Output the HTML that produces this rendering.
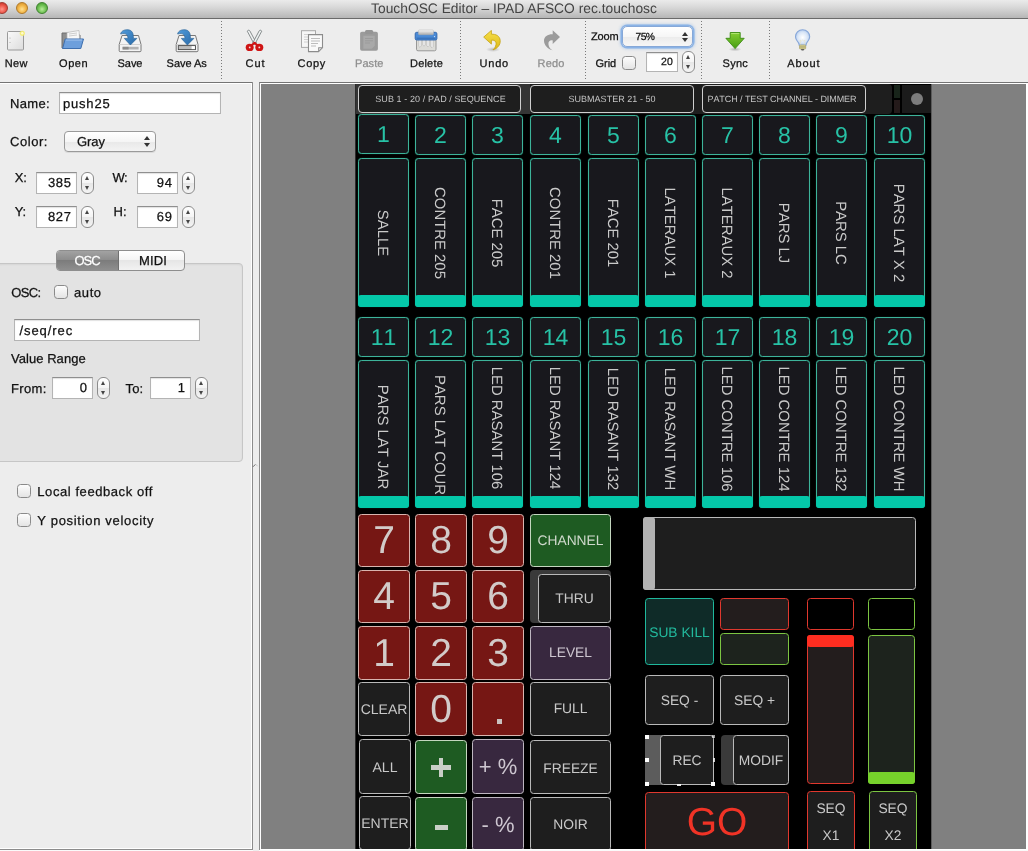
<!DOCTYPE html>
<html><head><meta charset="utf-8"><title>TouchOSC Editor</title>
<style>
*{box-sizing:border-box;margin:0;padding:0}
html,body{width:1028px;height:851px;overflow:hidden;background:#ededed;font-family:"Liberation Sans",sans-serif;}
body{position:relative;-webkit-font-smoothing:antialiased;text-rendering:geometricPrecision}
#root{position:absolute;left:0;top:0;width:1028px;height:851px;will-change:transform}
.a{position:absolute}
.t{position:absolute;white-space:nowrap;line-height:1;-webkit-text-stroke:.25px currentColor}
/* title bar */
#title{left:0;top:0;width:1028px;height:19px;background:linear-gradient(#ebebeb,#d6d6d6 45%,#b6b6b6);border-bottom:1px solid #6a6a6a}
#title .tt{left:0;width:1028px;top:2px;text-align:center;font-size:13.8px;color:#444;-webkit-text-stroke:0}
.tl{position:absolute;top:2px;width:12px;height:12px;border-radius:50%}
/* toolbar */
.lbl{font-size:11.5px;color:#111;text-align:center;letter-spacing:.3px}
.lbl.dis{color:#8e8e8e}
.sep{position:absolute;top:21px;width:1px;height:58px;background:repeating-linear-gradient(to bottom,#7a7a7a 0,#7a7a7a 1px,transparent 1px,transparent 3px)}
/* inputs */
.tf{position:absolute;background:#fff;border:1px solid #b4b4b4;border-top-color:#8f8f8f;box-shadow:inset 0 1px 1px rgba(0,0,0,.12)}
.tf span{position:absolute;font-size:13px;color:#111;line-height:1;letter-spacing:.4px;-webkit-text-stroke:.25px currentColor}
.st{position:absolute;width:13px;height:22px;border:1px solid #8c8c8c;border-radius:6px;background:linear-gradient(#fff,#f4f4f4 50%,#e6e6e6 50%,#f4f4f4)}
.st:before{content:"";position:absolute;left:3px;top:3px;border:2.5px solid transparent;border-bottom:4px solid #444;border-top:0}
.st:after{content:"";position:absolute;left:3px;bottom:3px;border:2.5px solid transparent;border-top:4px solid #444;border-bottom:0}
.cb{position:absolute;width:14px;height:14px;border:1px solid #8a8a8a;border-radius:3.5px;background:linear-gradient(#fdfdfd,#e4e4e4)}
.pl{font-size:13px;color:#111;letter-spacing:.35px}
/* canvas */
#cv{left:261px;top:84px;width:765px;height:765px;background:#808080;overflow:hidden}
#ly{left:95px;top:0;width:576px;height:768px;background:#000;font-kerning:none}
.b{position:absolute;border:1px solid;border-radius:3.5px}
.c{position:absolute;left:0;top:0;width:100%;height:100%;display:flex;align-items:center;justify-content:center;white-space:nowrap;line-height:1}
.teal{border-color:#3db39a;background:#18181d;box-shadow:0 0 1px rgba(40,180,150,.55),inset 0 0 1px rgba(40,180,150,.35)}
.num{color:#27c2a6;font-size:23px}
.fl{position:absolute;left:calc(50% - 1.1px);color:#c9c9c9;font-size:14.9px;line-height:1;white-space:nowrap;transform:translate(-50%,-50%) rotate(90deg)}
.h{position:absolute;left:-1px;right:-1px;bottom:-1px;height:12px;background:#04c8a9;border-radius:3px}
.red{background:#761714;border-color:#d9b4ae;color:#d2cbc9}
.gry{background:#1e1e1e;border-color:#b9b9b9;color:#c8c8c8}
.grn{background:#1e5b22;border-color:#c4d6bf;color:#cfd9cc}
.pur{background:#38283f;border-color:#bdb6c0;color:#cdc6d0}
</style></head>
<body><div id="root">
<div id="title" class="a"><div class="tl" style="left:-4px;background:radial-gradient(circle at 50% 62%,#ff978c,#ee5a4e 45%,#c7342a 85%,#b02a22);border:1px solid #9f3a32"></div><div class="tl" style="left:16px;background:radial-gradient(circle at 50% 62%,#ffe193,#f3b84a 45%,#d9942e 85%,#c5842a);border:1px solid #b07a2a"></div><div class="tl" style="left:36px;background:radial-gradient(circle at 50% 62%,#b9ec9c,#74c458 45%,#47a032 85%,#3c8c2a);border:1px solid #3f8230"></div><div class="t tt">TouchOSC Editor – IPAD AFSCO rec.touchosc</div></div>
<div class="a" style="left:0;top:19px;width:1028px;height:63px;background:#ededed"></div><div class="a" style="left:0;top:82px;width:1028px;height:1px;background:#747474"></div><div class="a" style="left:0;top:83px;width:1028px;height:1px;background:#fff"></div><svg class="a" style="left:6.0px;top:30px" width="20" height="22" viewBox="0 0 20 22"><defs><linearGradient id="gn" x1="0" y1="0" x2="1" y2="1"><stop offset="0" stop-color="#fafafa"/><stop offset="1" stop-color="#dcdcdc"/></linearGradient></defs><rect x="1.5" y="1.5" width="16" height="18.5" rx="1" fill="url(#gn)" stroke="#9a9a9a"/><circle cx="4" cy="8" r=".6" fill="#aaa"/><circle cx="4" cy="12.5" r=".6" fill="#aaa"/><circle cx="16.3" cy="3.3" r="2.6" fill="#f6ee70" opacity=".9"/><circle cx="16.3" cy="3.3" r="1.2" fill="#fffbd0"/></svg><div class="t" style="left:4.7px;top:59px;font-size:11px;color:#111;letter-spacing:0.40px">New</div>
<svg class="a" style="left:60.0px;top:29px" width="26" height="22" viewBox="0 0 26 22"><path d="M2 4h7l2 2h9v13H2z" fill="#8f8f8f" stroke="#6e6e6e"/><path d="M7 3.5l12-2 .8 12H7z" fill="#f8f8f8" stroke="#b5b5b5" stroke-width=".7"/><path d="M9 5l8-1M9 7l8-1" stroke="#c2c2c2" stroke-width=".8"/><path d="M5.2 10h18.3l-2.7 9.5H2.6z" fill="#6d9fdc" stroke="#3f6fae"/><path d="M5.8 11h16.4" stroke="#a6c6ee" stroke-width="1"/></svg><div class="t" style="left:59.1px;top:59px;font-size:11px;color:#111;letter-spacing:0.50px">Open</div>
<svg class="a" style="left:118.0px;top:28px" width="24" height="25" viewBox="0 0 24 25"><defs><linearGradient id="gb1" x1="0" y1="0" x2="1" y2="1"><stop offset="0" stop-color="#4f9bdb"/><stop offset="1" stop-color="#2a6aa8"/></linearGradient></defs><path d="M4 7.500H20.500L23 16.500V22.700a1 1 0 0 1-1 1H2.200a1 1 0 0 1-1-1V16.500z" fill="#f3f3f3" stroke="#787878" stroke-width="1"/><path d="M1.500 16.500H22.700" stroke="#c9c9c9" stroke-width=".8"/><rect x="4.600" y="18.800" width="16" height="2.700" fill="#b3b3b3"/><rect x="4.600" y="18.800" width="6" height="2.700" fill="#8b8b8b"/><path d="M2.600 6C3.400 2.600 6.800 1.500 10 1.800c4 .3 5.600 3.200 5.400 8.600h3.500L12.400 17 6.300 10.400h3.600C10 7 8 4.600 2.600 6z" fill="url(#gb1)" stroke="#2d6699" stroke-width=".7" stroke-linejoin="round"/></svg><div class="t" style="left:117.6px;top:59px;font-size:11px;color:#111;letter-spacing:-0.07px">Save</div>
<svg class="a" style="left:175.0px;top:28px" width="24" height="25" viewBox="0 0 24 25"><defs><linearGradient id="gb2" x1="0" y1="0" x2="1" y2="1"><stop offset="0" stop-color="#4f9bdb"/><stop offset="1" stop-color="#2a6aa8"/></linearGradient></defs><path d="M4 7.500H20.500L23 16.500V22.700a1 1 0 0 1-1 1H2.200a1 1 0 0 1-1-1V16.500z" fill="#f3f3f3" stroke="#787878" stroke-width="1"/><path d="M1.500 16.500H22.700" stroke="#c9c9c9" stroke-width=".8"/><rect x="3.300" y="17.600" width="17.200" height="4" fill="#bdbdbd" stroke="#4a4a4a" stroke-width=".9"/><rect x="16.600" y="18.100" width="3.300" height="3" fill="#fff"/><path d="M2.600 6C3.400 2.600 6.800 1.500 10 1.800c4 .3 5.600 3.200 5.400 8.600h3.500L12.400 17 6.300 10.400h3.600C10 7 8 4.600 2.600 6z" fill="url(#gb2)" stroke="#2d6699" stroke-width=".7" stroke-linejoin="round"/></svg><div class="t" style="left:166.6px;top:59px;font-size:11px;color:#111;letter-spacing:-0.02px">Save As</div>
<svg class="a" style="left:245.0px;top:29px" width="20" height="24" viewBox="0 0 20 24"><path d="M2.300 2.200c.5-1.300 2.100-1.300 2.600-.2L11.300 14l-1.900 1.600z" fill="#f2f5f5" stroke="#7c8182" stroke-width=".9"/><path d="M16.700 2.200c-.5-1.300-2.100-1.300-2.600-.2L7.700 14l1.900 1.600z" fill="#eef2f2" stroke="#7c8182" stroke-width=".9"/><ellipse cx="4.700" cy="18.400" rx="4" ry="3.700" fill="#cf1414"/><ellipse cx="14.300" cy="18.400" rx="4" ry="3.700" fill="#cf1414"/><path d="M6.500 16.500l3-2.700 3 2.700" fill="none" stroke="#cf1414" stroke-width="2.200" stroke-linejoin="round"/><circle cx="4.700" cy="18.400" r=".9" fill="#f3dede"/><circle cx="14.300" cy="18.400" r=".9" fill="#f3dede"/></svg><div class="t" style="left:245.6px;top:59px;font-size:11px;color:#111;letter-spacing:0.89px">Cut</div>
<svg class="a" style="left:300.0px;top:29px" width="24" height="24" viewBox="0 0 24 24"><rect x="1.500" y="1.700" width="14" height="16.700" fill="#f6f6f6" stroke="#a9a9a9"/><path d="M4 5.500h6M4 8h4M4 10.500h4M4 13h4" stroke="#cdcdcd" stroke-width=".9"/><path d="M8.500 5.600h14v13l-4 4h-10z" fill="#fafafa" stroke="#8c8c8c" stroke-width="1.100"/><path d="M22.500 18.600h-4v4z" fill="#d2d2d2" stroke="#8c8c8c" stroke-width=".8" stroke-linejoin="round"/><path d="M11 9.500h9M11 12h9M11 14.500h7M11 17h5" stroke="#b5b5b5" stroke-width=".9"/></svg><div class="t" style="left:297.6px;top:59px;font-size:11px;color:#111;letter-spacing:0.68px">Copy</div>
<svg class="a" style="left:359.0px;top:29px" width="20" height="24" viewBox="0 0 20 24"><rect x="1.100" y="2.800" width="17.800" height="19" rx="1.800" fill="#9b9b9b"/><rect x="6" y=".9" width="8.200" height="4" rx="1.500" fill="#959595"/><path d="M4.300 6.800h11.400v10l-3 3H4.300z" fill="#a9a9a9"/><path d="M6 9.500h8M6 11.800h8M6 14h5" stroke="#9a9a9a" stroke-width=".9"/></svg><div class="t" style="left:355.1px;top:59px;font-size:11px;color:#8e8e8e;letter-spacing:0.03px">Paste</div>
<svg class="a" style="left:414.0px;top:29px" width="24" height="24" viewBox="0 0 24 24"><defs><linearGradient id="gd" x1="0" y1="0" x2="0" y2="1"><stop offset="0" stop-color="#fafafa"/><stop offset="1" stop-color="#a9a9a9"/></linearGradient></defs><rect x="2.500" y="10" width="19.500" height="11.800" rx="1.500" fill="#dcdcd8" stroke="#8f8f8f" stroke-width=".9"/><path d="M5 11v6.500q1 2 2-.5V11M9 11v5q1 2.500 2 0V11M13 11v6q1 2 2-.5V11M17 11v7q1 1.500 2-.5V11" fill="#fbfbfb" stroke="#a2a2a2" stroke-width=".5"/><rect x="1.200" y="3.300" width="21.700" height="7.700" rx="1.500" fill="#4a8ad6" stroke="#2c62a8" stroke-width=".9"/><path d="M2.500 9.200h19" stroke="#2c62a8" stroke-width=".8"/><rect x="4.400" y="1" width="15.100" height="4.700" rx="1" fill="url(#gd)" stroke="#b4b4b4" stroke-width=".5"/><circle cx="20.500" cy="7.600" r=".6" fill="#d8e6f8"/></svg><div class="t" style="left:410.0px;top:59px;font-size:11px;color:#111;letter-spacing:0.20px">Delete</div>
<svg class="a" style="left:483.0px;top:30px" width="20" height="24" viewBox="0 0 20 24"><defs><radialGradient id="gsh"><stop offset="0" stop-color="#000" stop-opacity=".22"/><stop offset="1" stop-color="#000" stop-opacity="0"/></radialGradient><linearGradient id="gu" x1="0" y1="0" x2="0" y2="1"><stop offset="0" stop-color="#f7e04a"/><stop offset="1" stop-color="#dcb818"/></linearGradient></defs><ellipse cx="10" cy="19.500" rx="7" ry="2.500" fill="url(#gsh)"/><path d="M8.400.4L.7 7.100l7.700 7V10.200c3.100-.4 5.100 1.300 4.600 4.300-.4 2.300-1.500 4-3 5.300 4.500-1.300 7.500-4.800 7.200-9.300C16.800 6 13 4 8.400 4.200z" fill="url(#gu)" stroke="#c4a212" stroke-width=".8" stroke-linejoin="round"/></svg><div class="t" style="left:479.6px;top:59px;font-size:11px;color:#111;letter-spacing:0.75px">Undo</div>
<svg class="a" style="left:542.0px;top:30px" width="20" height="24" viewBox="0 0 20 24"><path d="M10.700.2L18 7.100l-7.300 7V10.400c-3.100-.4-4.700 1.300-4.200 4.300.4 2.300 1.700 4.300 4 5.600C6 19 2.100 15.500 2 10.700 2 6.200 6.100 4 10.700 4.200z" fill="#9b9b9b"/></svg><div class="t" style="left:537.6px;top:59px;font-size:11px;color:#8e8e8e;letter-spacing:0.13px">Redo</div>
<svg class="a" style="left:725.0px;top:31px" width="20" height="21" viewBox="0 0 20 21"><defs><linearGradient id="gs" x1="0" y1="0" x2="0" y2="1"><stop offset="0" stop-color="#86cf34"/><stop offset="1" stop-color="#459c12"/></linearGradient><radialGradient id="gsh2"><stop offset="0" stop-color="#000" stop-opacity=".25"/><stop offset="1" stop-color="#000" stop-opacity="0"/></radialGradient></defs><ellipse cx="10" cy="18.300" rx="6.500" ry="2" fill="url(#gsh2)"/><path d="M5.200 1.500h10v5.800h4L10.100 17.600.9 7.300h4.300z" fill="url(#gs)" stroke="#3b8a12" stroke-width=".9" stroke-linejoin="round"/><path d="M6.200 2.500h8" stroke="#b4e678" stroke-width=".9"/></svg><div class="t" style="left:722.6px;top:59px;font-size:11px;color:#111;letter-spacing:0.24px">Sync</div>
<svg class="a" style="left:794.0px;top:27.500px" width="18" height="26" viewBox="0 0 18 26"><defs><radialGradient id="ga" cx=".5" cy=".5" r=".6"><stop offset="0" stop-color="#ffffff"/><stop offset=".55" stop-color="#dbe7f7"/><stop offset="1" stop-color="#a3c0ea"/></radialGradient></defs><path d="M8.600 1.800c-4.200 0-7.100 3.100-7.100 6.900 0 2.600 1.500 4 2.600 5.500.7 1 1.100 2 1.100 3h6.800c0-1 .4-2 1.100-3 1.100-1.500 2.600-2.900 2.600-5.500 0-3.800-2.900-6.900-7.100-6.900z" fill="url(#ga)" stroke="#86a6d8" stroke-width="1.100"/><path d="M6.600 16.500l-.4-4.500 1.200 1 1.200-1 1.200 1 1.200-1-.4 4.500" fill="none" stroke="#e6e2c8" stroke-width=".7"/><rect x="5.500" y="17" width="6.200" height="4" rx=".8" fill="#ddd69a" stroke="#a39c62" stroke-width=".6"/><path d="M5.700 18.400h5.800M5.700 19.700h5.800" stroke="#a39c62" stroke-width=".6"/><path d="M6.800 21h3.600l-.9 1.600H7.700z" fill="#5e5e5e"/></svg><div class="t" style="left:787.2px;top:59px;font-size:11px;color:#111;letter-spacing:0.89px">About</div>
<div class="sep" style="left:221px"></div><div class="sep" style="left:460px"></div><div class="sep" style="left:585px"></div><div class="sep" style="left:701px"></div><div class="sep" style="left:769px"></div><div class="t" style="left:591.0px;top:32px;font-size:11px;color:#111;letter-spacing:-0.18px">Zoom</div><div class="a" style="left:622px;top:26px;width:71px;height:21px;border:1px solid #86a8d8;border-radius:5px;background:linear-gradient(#fff,#f6f6f6 50%,#ebebeb 50%,#f6f6f6);box-shadow:0 0 0 1.5px rgba(120,168,228,.75),0 0 3px 1.5px rgba(120,168,228,.45)"></div><div class="t" style="left:635.6px;top:33px;font-size:10.3px;color:#111;letter-spacing:-0.61px">75%</div><div class="a" style="left:681.700px;top:31.500px;border:3px solid transparent;border-bottom:4.500px solid #333;border-top:0"></div><div class="a" style="left:681.700px;top:38px;border:3px solid transparent;border-top:4.500px solid #333;border-bottom:0"></div><div class="t" style="left:595.6px;top:59px;font-size:11px;color:#111;letter-spacing:-0.07px">Grid</div><div class="cb" style="left:622px;top:56px"></div><div class="tf" style="left:646px;top:52px;width:32px;height:20px"><span style="right:4px;top:4px;font-size:10.5px;letter-spacing:.2px">20</span></div><div class="st" style="left:682px;top:51px"></div>
<div class="a" style="left:0;top:84px;width:251px;height:765px;background:#ededed"></div><div class="a" style="left:251px;top:83px;width:1px;height:766px;background:#fff"></div><div class="a" style="left:252px;top:82px;width:1px;height:768px;background:#8c8c8c"></div><div class="a" style="left:0;top:848px;width:252px;height:1px;background:#fff"></div><div class="a" style="left:0;top:849px;width:253px;height:1px;background:#8c8c8c"></div><div class="a" style="left:0;top:850px;width:1028px;height:1px;background:#fafafa"></div><div class="a" style="left:253px;top:82px;width:6px;height:769px;background:#ededed"></div><svg class="a" style="left:252px;top:462px" width="8" height="7" viewBox="0 0 8 7"><path d="M1 4.800L3.600 2.200" stroke="#6a6a6a" stroke-width="1" fill="none"/><path d="M3.600 2.200L5.600 4.200" stroke="#c4c4c4" stroke-width="1" fill="none"/></svg><div class="a" style="left:259px;top:82px;width:769px;height:768px;background:#fff;border-left:1px solid #8c8c8c;border-top:1px solid #747474"></div><div class="t" style="left:10.0px;top:97px;font-size:13px;color:#111;letter-spacing:0.32px">Name:</div><div class="tf" style="left:59px;top:92px;width:162px;height:22px"><span style="left:3px;top:4px;letter-spacing:.8px">push25</span></div><div class="t" style="left:10.0px;top:134.5px;font-size:13px;color:#111;letter-spacing:0.55px">Color:</div><div class="a" style="left:64px;top:131px;width:92px;height:21px;border:1px solid #9a9a9a;border-radius:4px;background:linear-gradient(#fff,#f5f5f5 50%,#e8e8e8 50%,#f3f3f3);box-shadow:0 1px 0 rgba(0,0,0,.08)"></div><div class="t" style="left:77.0px;top:134.5px;font-size:13px;color:#111;letter-spacing:-0.09px">Gray</div><div class="a" style="left:143.500px;top:135.500px;border:3px solid transparent;border-bottom:4.500px solid #333;border-top:0"></div><div class="a" style="left:143.500px;top:142.500px;border:3px solid transparent;border-top:4.500px solid #333;border-bottom:0"></div><div class="t" style="left:14.8px;top:171px;font-size:13px;color:#111;letter-spacing:-0.34px">X:</div><div class="tf" style="left:36px;top:172px;width:41px;height:22px"><span style="right:4.500px;top:3px;font-size:13px;letter-spacing:.6px">385</span></div><div class="st" style="left:81px;top:172px"></div><div class="t" style="left:112.6px;top:171px;font-size:13px;color:#111;letter-spacing:-0.54px">W:</div><div class="tf" style="left:137px;top:172px;width:41px;height:22px"><span style="right:4.500px;top:3px;font-size:13px;letter-spacing:.6px">94</span></div><div class="st" style="left:182px;top:172px"></div><div class="t" style="left:14.8px;top:205px;font-size:13px;color:#111;letter-spacing:-0.34px">Y:</div><div class="tf" style="left:36px;top:206px;width:41px;height:22px"><span style="right:4.500px;top:3px;font-size:13px;letter-spacing:.6px">827</span></div><div class="st" style="left:81px;top:206px"></div><div class="t" style="left:113.6px;top:205px;font-size:13px;color:#111;letter-spacing:-0.10px">H:</div><div class="tf" style="left:137px;top:206px;width:41px;height:22px"><span style="right:4.500px;top:3px;font-size:13px;letter-spacing:.6px">69</span></div><div class="st" style="left:182px;top:206px"></div>
<div class="a" style="left:-4px;top:263px;width:247px;height:199px;background:#e3e3e3;border:1px solid #c6c6c6;border-radius:4px;box-shadow:inset 0 1px 2px rgba(0,0,0,.06)"></div><div class="a" style="left:56px;top:250px;width:129px;height:21px;border:1px solid #8e8e8e;border-radius:4px;background:linear-gradient(#fff,#f4f4f4 50%,#e6e6e6 50%,#f2f2f2);overflow:hidden"><div class="a" style="left:0;top:0;width:62px;height:19px;background:linear-gradient(#a2a2a2,#8b8b8b 50%,#7c7c7c 50%,#8e8e8e);border-right:1px solid #707070"></div></div><div class="t" style="left:74.6px;top:254px;font-size:13px;color:#fff;letter-spacing:-1.12px">OSC</div><div class="t" style="left:139.1px;top:254px;font-size:13px;color:#111;letter-spacing:0.14px">MIDI</div><div class="t" style="left:11.2px;top:285.5px;font-size:13px;color:#111;letter-spacing:-0.65px">OSC:</div><div class="cb" style="left:54px;top:285px"></div><div class="t" style="left:74.0px;top:285.5px;font-size:13px;color:#111;letter-spacing:0.60px">auto</div><div class="tf" style="left:14px;top:319px;width:186px;height:22px"><span style="left:4.500px;top:4px;letter-spacing:.92px">/seq/rec</span></div><div class="t" style="left:10.9px;top:352px;font-size:13px;color:#111;letter-spacing:0.06px">Value Range</div><div class="t" style="left:10.9px;top:382px;font-size:13px;color:#111;letter-spacing:0.41px">From:</div><div class="tf" style="left:52px;top:377px;width:41px;height:22px"><span style="right:4.500px;top:3px;font-size:13px;letter-spacing:.6px">0</span></div><div class="st" style="left:97px;top:377px"></div><div class="t" style="left:125.4px;top:382px;font-size:13px;color:#111;letter-spacing:0.24px">To:</div><div class="tf" style="left:150px;top:377px;width:41px;height:22px"><span style="right:4.500px;top:3px;font-size:13px;letter-spacing:.6px">1</span></div><div class="st" style="left:195px;top:377px"></div><div class="cb" style="left:17px;top:484px"></div><div class="t" style="left:37.3px;top:485px;font-size:13px;color:#111;letter-spacing:0.57px">Local feedback off</div><div class="cb" style="left:17px;top:513px"></div><div class="t" style="left:37.3px;top:514px;font-size:13px;color:#111;letter-spacing:0.69px">Y position velocity</div><div id="cv" class="a"><div id="ly" class="a">
<div class="a" style="left:0;top:0;width:536px;height:30px;background:#1e1e1e;border-radius:0 4px 4px 0"></div><div class="a" style="left:0;top:0;width:174px;height:30px;background:#353535"></div><div class="b " style="left:2px;top:1px;width:163px;height:28px;background:#1e1e1e;border-color:#cfcfcf;border-radius:4px"><div class="c" style="font-size:9px;color:#c4c4c4;letter-spacing:0.09px;left:1px">SUB 1 - 20 / PAD / SEQUENCE</div></div><div class="b " style="left:174px;top:1px;width:164px;height:28px;background:#1e1e1e;border-color:#cfcfcf;border-radius:4px"><div class="c" style="font-size:9px;color:#c4c4c4;letter-spacing:0.04px;left:0px">SUBMASTER 21 - 50</div></div><div class="b " style="left:346px;top:1px;width:164px;height:28px;background:#1e1e1e;border-color:#cfcfcf;border-radius:4px"><div class="c" style="font-size:9px;color:#c4c4c4;letter-spacing:-0.07px;left:-2px">PATCH / TEST CHANNEL - DIMMER</div></div><div class="a" style="left:538px;top:1px;width:6px;height:13px;background:#18241a"></div><div class="a" style="left:538px;top:16px;width:6px;height:13px;background:#241a1a"></div><div class="a" style="left:546px;top:1px;width:30px;height:28px;background:#1b1b1b"></div><div class="a" style="left:555px;top:9px;width:12px;height:12px;border-radius:50%;background:#7d7d7d"></div>
<div class="b teal" style="left:2px;top:30px;width:51px;height:40px;"><div class="c num">1</div></div><div class="b teal" style="left:2px;top:74px;width:51px;height:149px;"><span class="fl" style="top:74px">SALLE</span><div class="h"></div></div><div class="b teal" style="left:59px;top:31px;width:51px;height:40px;"><div class="c num">2</div></div><div class="b teal" style="left:59px;top:74px;width:51px;height:149px;"><span class="fl" style="top:74px">CONTRE 205</span><div class="h"></div></div><div class="b teal" style="left:116px;top:31px;width:51px;height:40px;"><div class="c num">3</div></div><div class="b teal" style="left:116px;top:74px;width:51px;height:149px;"><span class="fl" style="top:74px">FACE 205</span><div class="h"></div></div><div class="b teal" style="left:174px;top:31px;width:51px;height:40px;"><div class="c num">4</div></div><div class="b teal" style="left:174px;top:74px;width:51px;height:149px;"><span class="fl" style="top:74px">CONTRE 201</span><div class="h"></div></div><div class="b teal" style="left:232px;top:31px;width:51px;height:40px;"><div class="c num">5</div></div><div class="b teal" style="left:232px;top:74px;width:51px;height:149px;"><span class="fl" style="top:74px">FACE 201</span><div class="h"></div></div><div class="b teal" style="left:289px;top:31px;width:51px;height:40px;"><div class="c num">6</div></div><div class="b teal" style="left:289px;top:74px;width:51px;height:149px;"><span class="fl" style="top:74px">LATERAUX 1</span><div class="h"></div></div><div class="b teal" style="left:346px;top:31px;width:51px;height:40px;"><div class="c num">7</div></div><div class="b teal" style="left:346px;top:74px;width:51px;height:149px;"><span class="fl" style="top:74px">LATERAUX 2</span><div class="h"></div></div><div class="b teal" style="left:403px;top:31px;width:51px;height:40px;"><div class="c num">8</div></div><div class="b teal" style="left:403px;top:74px;width:51px;height:149px;"><span class="fl" style="top:74px">PARS LJ</span><div class="h"></div></div><div class="b teal" style="left:460px;top:31px;width:51px;height:40px;"><div class="c num">9</div></div><div class="b teal" style="left:460px;top:74px;width:51px;height:149px;"><span class="fl" style="top:74px">PARS LC</span><div class="h"></div></div><div class="b teal" style="left:518px;top:31px;width:51px;height:40px;"><div class="c num">10</div></div><div class="b teal" style="left:518px;top:74px;width:51px;height:149px;"><span class="fl" style="top:74px">PARS LAT X 2</span><div class="h"></div></div><div class="b teal" style="left:2px;top:233px;width:51px;height:40px;"><div class="c num">11</div></div><div class="b teal" style="left:2px;top:276px;width:51px;height:148px;"><span class="fl" style="top:75.6px">PARS LAT JAR</span><div class="h"></div></div><div class="b teal" style="left:59px;top:233px;width:51px;height:40px;"><div class="c num">12</div></div><div class="b teal" style="left:59px;top:276px;width:51px;height:148px;"><span class="fl" style="top:73.5px">PARS LAT COUR</span><div class="h"></div></div><div class="b teal" style="left:116px;top:233px;width:51px;height:40px;"><div class="c num">13</div></div><div class="b teal" style="left:116px;top:276px;width:51px;height:148px;"><span class="fl" style="top:67.1px">LED RASANT 106</span><div class="h"></div></div><div class="b teal" style="left:174px;top:233px;width:51px;height:40px;"><div class="c num">14</div></div><div class="b teal" style="left:174px;top:276px;width:51px;height:148px;"><span class="fl" style="top:67.1px">LED RASANT 124</span><div class="h"></div></div><div class="b teal" style="left:232px;top:233px;width:51px;height:40px;"><div class="c num">15</div></div><div class="b teal" style="left:232px;top:276px;width:51px;height:148px;"><span class="fl" style="top:68.2px">LED RASANT 132</span><div class="h"></div></div><div class="b teal" style="left:289px;top:233px;width:51px;height:40px;"><div class="c num">16</div></div><div class="b teal" style="left:289px;top:276px;width:51px;height:148px;"><span class="fl" style="top:67.5px">LED RASANT WH</span><div class="h"></div></div><div class="b teal" style="left:346px;top:233px;width:51px;height:40px;"><div class="c num">17</div></div><div class="b teal" style="left:346px;top:276px;width:51px;height:148px;"><span class="fl" style="top:68.4px">LED CONTRE 106</span><div class="h"></div></div><div class="b teal" style="left:403px;top:233px;width:51px;height:40px;"><div class="c num">18</div></div><div class="b teal" style="left:403px;top:276px;width:51px;height:148px;"><span class="fl" style="top:68.4px">LED CONTRE 124</span><div class="h"></div></div><div class="b teal" style="left:460px;top:233px;width:51px;height:40px;"><div class="c num">19</div></div><div class="b teal" style="left:460px;top:276px;width:51px;height:148px;"><span class="fl" style="top:68.4px">LED CONTRE 132</span><div class="h"></div></div><div class="b teal" style="left:518px;top:233px;width:51px;height:40px;"><div class="c num">20</div></div><div class="b teal" style="left:518px;top:276px;width:51px;height:148px;"><span class="fl" style="top:68.4px">LED CONTRE WH</span><div class="h"></div></div>
<div class="b red" style="left:2px;top:430px;width:52px;height:53px;"><div class="c" style="font-size:39px">7</div></div><div class="b red" style="left:59px;top:430px;width:52px;height:53px;"><div class="c" style="font-size:39px">8</div></div><div class="b red" style="left:116px;top:430px;width:52px;height:53px;"><div class="c" style="font-size:39px">9</div></div><div class="b red" style="left:2px;top:486px;width:52px;height:53px;"><div class="c" style="font-size:39px">4</div></div><div class="b red" style="left:59px;top:486px;width:52px;height:53px;"><div class="c" style="font-size:39px">5</div></div><div class="b red" style="left:116px;top:486px;width:52px;height:53px;"><div class="c" style="font-size:39px">6</div></div><div class="b red" style="left:2px;top:542px;width:52px;height:54px;"><div class="c" style="font-size:39px">1</div></div><div class="b red" style="left:59px;top:542px;width:52px;height:54px;"><div class="c" style="font-size:39px">2</div></div><div class="b red" style="left:116px;top:542px;width:52px;height:54px;"><div class="c" style="font-size:39px">3</div></div><div class="b gry" style="left:2px;top:598px;width:52px;height:54px;"><div class="c" style="font-size:14px">CLEAR</div></div><div class="b red" style="left:59px;top:598px;width:52px;height:54px;"><div class="c" style="font-size:39px">0</div></div><div class="b red" style="left:116px;top:598px;width:52px;height:54px;"><div class="c" style="font-size:39px"><i style="position:absolute;left:24px;top:36px;width:5px;height:5px;background:#c9c1bf"></i></div></div><div class="b gry" style="left:3px;top:655px;width:52px;height:55px;"><div class="c" style="font-size:14px">ALL</div></div><div class="b grn" style="left:59px;top:656px;width:52px;height:54px;"><div class="c" style=""><i style="position:absolute;left:15px;top:24px;width:20px;height:4.5px;background:#c9cfc7"></i><i style="position:absolute;left:22.500px;top:16.500px;width:4.500px;height:19.500px;background:#c9cfc7"></i></div></div><div class="b pur" style="left:116px;top:655px;width:52px;height:55px;"><div class="c" style="font-size:22px">+ %</div></div><div class="b gry" style="left:3px;top:712px;width:52px;height:54px;"><div class="c" style="font-size:14px">ENTER</div></div><div class="b grn" style="left:59px;top:713px;width:52px;height:54px;"><div class="c" style=""><i style="position:absolute;left:18.500px;top:27px;width:13.500px;height:5px;background:#c9cfc7"></i></div></div><div class="b pur" style="left:116px;top:713px;width:52px;height:54px;"><div class="c" style="font-size:22px;height:53px">- %</div></div><div class="b grn" style="left:174px;top:430px;width:81px;height:53px;"><div class="c" style="font-size:13.8px">CHANNEL</div></div><div class="a" style="left:174px;top:486px;width:81px;height:53px;background:#3a3a3a;border-radius:4px"></div><div class="b gry" style="left:182px;top:490px;width:73px;height:49px;"><div class="c" style="font-size:13.8px">THRU</div></div><div class="b pur" style="left:174px;top:542px;width:81px;height:54px;"><div class="c" style="font-size:13.8px">LEVEL</div></div><div class="b gry" style="left:174px;top:598px;width:81px;height:54px;"><div class="c" style="font-size:13.8px">FULL</div></div><div class="b gry" style="left:174px;top:656px;width:81px;height:54px;"><div class="c" style="font-size:13.8px;padding-top:3px">FREEZE</div></div><div class="b gry" style="left:174px;top:713px;width:81px;height:54px;"><div class="c" style="font-size:13.8px;top:1px">NOIR</div></div>
<div class="b " style="left:287px;top:433px;width:273px;height:73px;background:#1e1e1e;border-color:#b9b9b9"><div class="a" style="left:-1px;top:-1px;bottom:-1px;width:12px;background:#b2b2b2;border-radius:3px"></div></div><div class="b " style="left:289px;top:514px;width:69px;height:67px;background:#0f2b28;border-color:#1fb89c"><div class="c" style="font-size:13.8px;color:#22b89c;top:1px">SUB KILL</div></div><div class="b " style="left:364px;top:514px;width:69px;height:32px;background:#231d1d;border-color:#e0382e"></div><div class="b " style="left:364px;top:549px;width:69px;height:32px;background:#1d231d;border-color:#7cc542"></div><div class="b " style="left:451px;top:514px;width:47px;height:32px;background:#000;border-color:#e0382e"></div><div class="b " style="left:512px;top:514px;width:47px;height:32px;background:#000;border-color:#7cc542"></div><div class="b " style="left:451px;top:551px;width:47px;height:149px;background:#231d1d;border-color:#e0382e"><div class="a" style="left:-1px;top:-1px;right:-1px;height:12px;background:#ff2d20;border-radius:3px"></div></div><div class="b " style="left:512px;top:551px;width:47px;height:149px;background:#1d231d;border-color:#7cc542"><div class="a" style="left:-1px;bottom:-1px;right:-1px;height:12px;background:#76d12b;border-radius:3px"></div></div><div class="b gry" style="left:289px;top:591px;width:69px;height:50px;"><div class="c" style="font-size:13.8px;top:1px">SEQ -</div></div><div class="b gry" style="left:364px;top:591px;width:69px;height:50px;"><div class="c" style="font-size:13.8px;top:1px">SEQ +</div></div><div class="a" style="left:289px;top:651px;width:69px;height:50px;background:#5c5c5c;border-radius:3px"></div><div class="b gry" style="left:304px;top:651px;width:54px;height:50px;"><div class="c" style="font-size:13.8px;top:1px">REC</div></div><div class="a" style="left:289px;top:651px;width:4px;height:4px;background:#fff;opacity:1"></div><div class="a" style="left:289px;top:674px;width:4px;height:4px;background:#fff;opacity:1"></div><div class="a" style="left:289px;top:698px;width:4px;height:4px;background:#fff;opacity:1"></div><div class="a" style="left:321px;top:700px;width:4px;height:2px;background:#fff;opacity:0.9"></div><div class="a" style="left:355px;top:698px;width:4px;height:4px;background:#fff;opacity:1"></div><div class="a" style="left:357px;top:674px;width:2px;height:4px;background:#fff;opacity:0.8"></div><div class="a" style="left:356px;top:651px;width:3px;height:3px;background:#fff;opacity:0.6"></div><div class="a" style="left:365px;top:651px;width:68px;height:50px;background:#3a3a3a;border-radius:4px"></div><div class="b gry" style="left:377px;top:651px;width:56px;height:50px;"><div class="c" style="font-size:13.8px;top:1px">MODIF</div></div><div class="b " style="left:289px;top:708px;width:144px;height:68px;background:#231d1d;border-color:#e0382e"><div class="a" style="left:0;top:10px;width:100%;text-align:center;font-size:39px;line-height:1;color:#f03326">GO</div></div><div class="b " style="left:451px;top:707px;width:48px;height:69px;background:#1e1e1e;border-color:#e0382e"><div class="a" style="left:0;top:10px;width:100%;text-align:center;font-size:13.8px;line-height:1;color:#c8c8c8">SEQ</div><div class="a" style="left:0;top:37px;width:100%;text-align:center;font-size:13.8px;line-height:1;color:#c8c8c8">X1</div></div><div class="b " style="left:513px;top:707px;width:48px;height:69px;background:#1e1e1e;border-color:#7cc542"><div class="a" style="left:0;top:10px;width:100%;text-align:center;font-size:13.8px;line-height:1;color:#c8c8c8">SEQ</div><div class="a" style="left:0;top:37px;width:100%;text-align:center;font-size:13.8px;line-height:1;color:#c8c8c8">X2</div></div><div class="a" style="left:575px;top:0;width:1px;height:768px;background:#5a5a5a"></div>
</div><div class="a" style="left:94px;top:0;width:1px;height:768px;background:#2c2c2c"></div></div>
</div></body></html>
